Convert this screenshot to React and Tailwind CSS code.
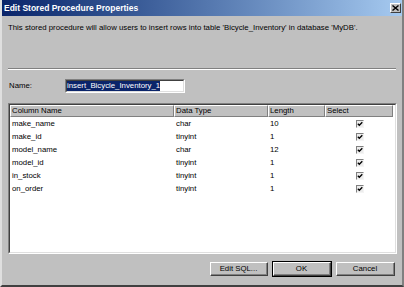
export default function App() {
  const rows = [
    ["make_name", "char", "10"],
    ["make_id", "tinyint", "1"],
    ["model_name", "char", "12"],
    ["model_id", "tinyint", "1"],
    ["in_stock", "tinyint", "1"],
    ["on_order", "tinyint", "1"],
  ];
  const Btn = ({ children, def }) => (
    <div className={def ? "border border-black" : "border border-transparent"}>
      <div className="border-t border-l border-t-white border-l-white border-b border-r border-b-[#404040] border-r-[#404040]">
        <div className="border-b border-r border-b-[#808080] border-r-[#808080] h-[12px] flex items-center justify-center text-[7.8px] leading-none">
          {children}
        </div>
      </div>
    </div>
  );
  return (
    <div className="w-[404px] h-[287px] overflow-hidden bg-[#c0c0c0] font-['Liberation_Sans',Arial,sans-serif] text-black">
      <div className="w-full h-full flex flex-col border-l-2 border-l-[#dfdfdf] border-r-2 border-r-[#808080] border-b-2 border-b-[#404040]">
        {/* Title bar */}
        <div className="h-[16px] shrink-0 flex items-center justify-between pl-[2px] pr-[1px] bg-linear-to-r from-[#0a246a] to-[#a6caf0]">
          <span className="text-white font-bold text-[8.5px] leading-none">Edit Stored Procedure Properties</span>
          <div className="w-[11px] h-[10px] bg-[#c0c0c0] border-t border-l border-t-white border-l-white border-b border-r border-b-[#404040] border-r-[#404040] flex items-center justify-center">
            <svg width="7" height="6" viewBox="0 0 7 6">
              <path d="M0.5 0.5 L6.5 5.5 M6.5 0.5 L0.5 5.5" stroke="black" strokeWidth="1.4" />
            </svg>
          </div>
        </div>

        {/* Description */}
        <div className="mt-[7px] pl-[6px] text-[7.8px] leading-[10px] whitespace-nowrap">
          This stored procedure will allow users to insert rows into table 'Bicycle_Inventory' in database 'MyDB'.
        </div>

        {/* Separator */}
        <div className="mt-[35px] mx-[6px] border-t border-t-[#808080] border-b border-b-white"></div>

        {/* Name row */}
        <div className="mt-[9px] flex items-center pl-[7px]">
          <span className="w-[56px] text-[7.8px] leading-none">Name:</span>
          <div className="w-[120px] h-[14px] border-t border-l border-t-[#808080] border-l-[#808080] border-b border-r border-b-white border-r-white">
            <div className="w-full h-full bg-white border-t border-l border-t-[#404040] border-l-[#404040] border-b border-r border-b-[#dfdfdf] border-r-[#dfdfdf] flex items-center">
              <span className="bg-[#0a246a] text-white text-[7.8px] leading-[10px] px-[0px]">insert_Bicycle_Inventory_1</span>
            </div>
          </div>
        </div>

        {/* List */}
        <div className="mt-[10px] ml-[6px] w-[389px] h-[151px] border-t border-l border-t-[#808080] border-l-[#808080] border-b border-r border-b-white border-r-white">
          <div className="w-full h-full bg-white border-t border-l border-t-[#404040] border-l-[#404040] border-b border-r border-b-[#dfdfdf] border-r-[#dfdfdf] flex flex-col">
            <div className="flex h-[12px] shrink-0 text-[7.8px] leading-none">
              {[
                ["Column Name", "w-[164px]"],
                ["Data Type", "w-[94px]"],
                ["Length", "w-[57px]"],
                ["Select", "w-[68px]"],
              ].map(([t, w]) => (
                <div
                  key={t}
                  className={`${w} h-full bg-[#c0c0c0] border-l border-t border-l-white border-t-white border-r border-b border-r-[#808080] border-b-[#808080] flex items-center pl-[1px]`}
                >
                  {t}
                </div>
              ))}
            </div>
            {rows.map(([n, t, l]) => (
              <div key={n} className="flex h-[13px] items-center text-[7.8px] leading-none">
                <div className="w-[164px] pl-[2px]">{n}</div>
                <div className="w-[94px] pl-[2px]">{t}</div>
                <div className="w-[57px] pl-[2px]">{l}</div>
                <div className="w-[68px] pl-[31px] flex items-center">
                  <div className="w-[8px] h-[8px] bg-[#ececec] border-t border-l border-t-[#808080] border-l-[#808080] border-b border-r border-b-[#f4f4f4] border-r-[#f4f4f4] flex items-center justify-center">
                    <svg width="6" height="6" viewBox="0 0 6 6">
                      <path d="M0.8 2.8 L2.3 4.3 L5.3 1.2" stroke="black" strokeWidth="1.3" fill="none" />
                    </svg>
                  </div>
                </div>
              </div>
            ))}
          </div>
        </div>

        {/* Buttons */}
        <div className="mt-[7px] flex justify-end gap-[3px] pr-[6px]">
          <div className="w-[60px]"><Btn>Edit SQL...</Btn></div>
          <div className="w-[60px]"><Btn def>OK</Btn></div>
          <div className="w-[61px]"><Btn>Cancel</Btn></div>
        </div>
      </div>
    </div>
  );
}
